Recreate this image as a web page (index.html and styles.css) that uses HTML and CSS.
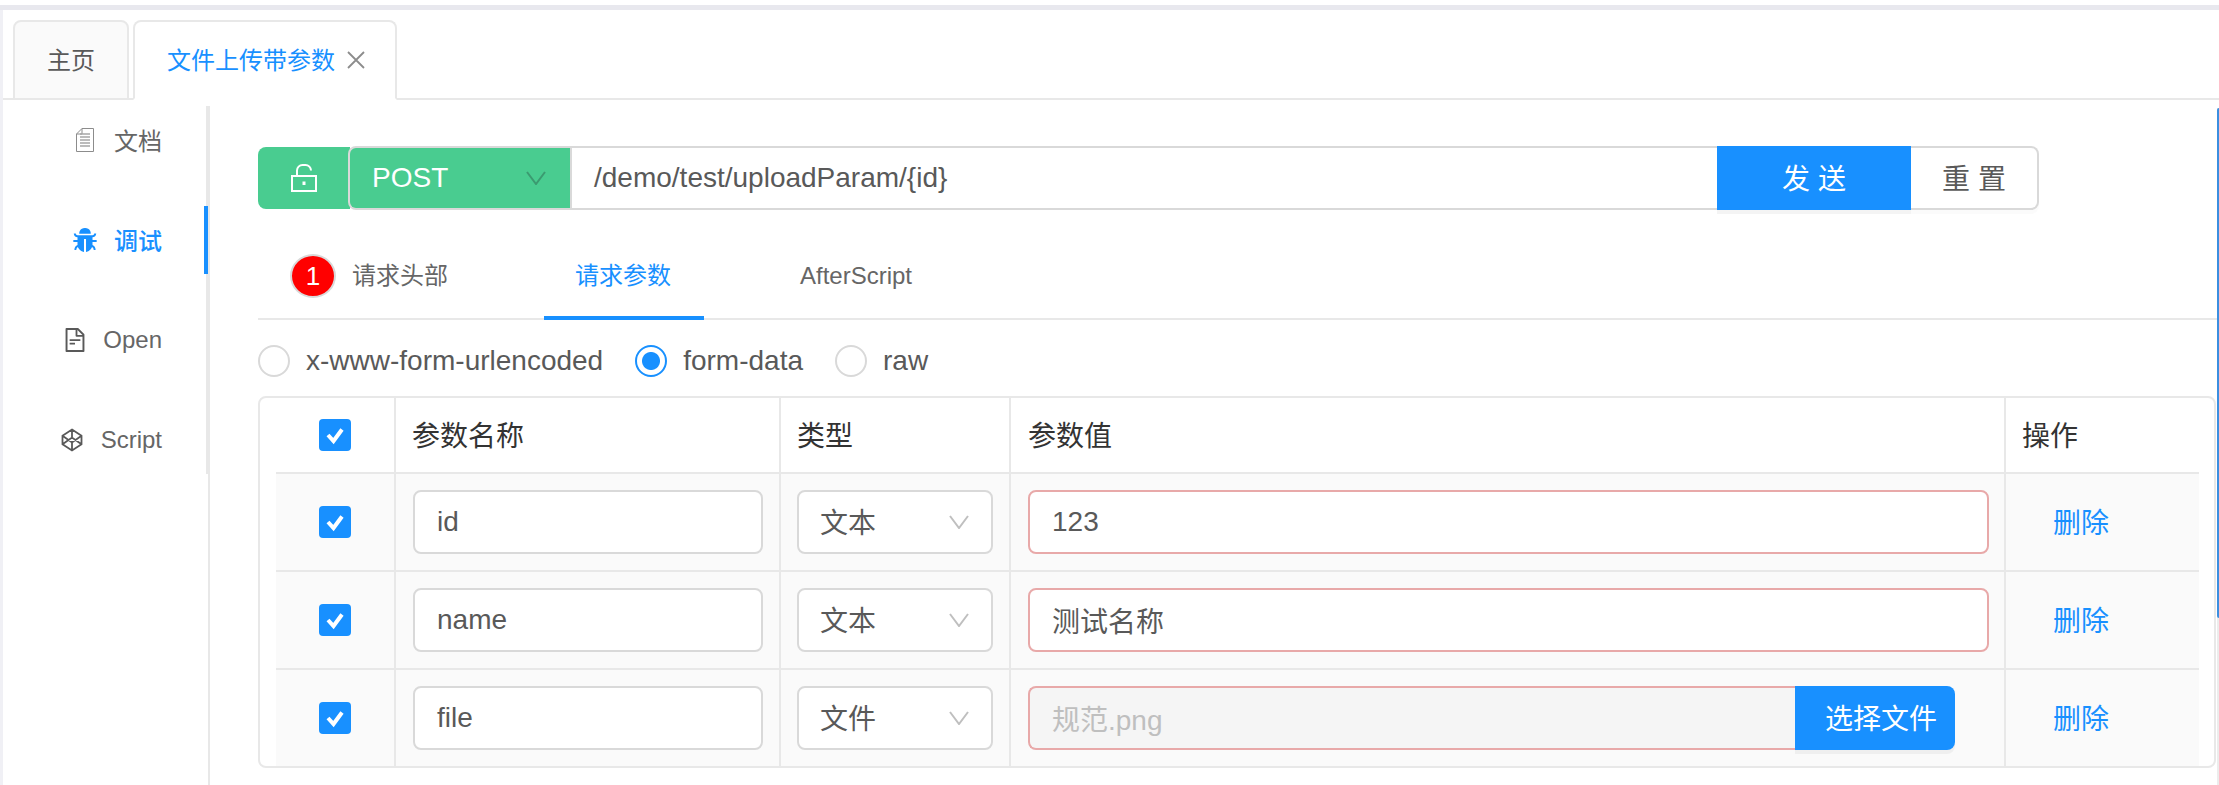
FILE: index.html
```html
<!DOCTYPE html>
<html lang="zh">
<head>
<meta charset="utf-8">
<title>文件上传带参数</title>
<link rel="stylesheet" href="styles.css">
</head>
<body>
<div class="topband"></div>
<div class="shell">
  <div class="strip"></div>
  <div class="app">
    <div class="tabbar">
      <div class="tab">主页</div>
      <div class="tab tab-active">文件上传带参数
        <svg class="tab-close" viewBox="0 0 18 18"><path d="M1 1l16 16M17 1L1 17"/></svg>
      </div>
    </div>
    <div class="workspace">
      <nav class="sidebar">
        <div class="nav-item">
          <svg class="ico-doc" viewBox="0 0 18 24"><path class="doc-outline" d="M6 .5h11.500v23H.5V6zM6 .5V6H.5"/><path class="doc-lines" d="M4 6h10M4 9h10M4 12h10M4 15h10M4 18h10"/></svg>
          <span class="nav-cjk">文档</span>
        </div>
        <div class="nav-item nav-active">
          <svg class="ico-bug" viewBox="64 64 896 896"><path d="M304 280h416c4.400 0 8-3.600 8-8 0-40-8.800-76.700-25.900-108.100a184.310 184.310 0 0 0-74-74C596.700 72.800 560 64 520 64h-16c-40 0-76.700 8.800-108.100 25.900a184.310 184.310 0 0 0-74 74C304.800 195.300 296 232 296 272c0 4.400 3.600 8 8 8z"/><path d="M940 512H792V412c76.800 0 139-62.200 139-139 0-4.400-3.600-8-8-8h-60c-4.400 0-8 3.600-8 8a63 63 0 0 1-63 63H232a63 63 0 0 1-63-63c0-4.400-3.600-8-8-8h-60c-4.400 0-8 3.600-8 8 0 76.800 62.200 139 139 139v100H84c-4.400 0-8 3.600-8 8v56c0 4.400 3.600 8 8 8h148v96c0 6.500.2 13 .7 19.300C164.100 728.600 116 796.700 116 876c0 4.400 3.600 8 8 8h56c4.400 0 8-3.600 8-8 0-44.200 23.900-82.900 59.600-103.700a273 273 0 0 0 22.700 49c24.300 41.500 59 76.200 100.500 100.500 28.900 16.900 61 28.800 95.300 34.500 4.400 0 8-3.600 8-8V484c0-4.400 3.600-8 8-8h60c4.400 0 8 3.600 8 8v464.200c0 4.400 3.600 8 8 8 34.300-5.700 66.400-17.600 95.300-34.500a281.380 281.380 0 0 0 123.200-149.500A120.400 120.400 0 0 1 836 876c0 4.400 3.600 8 8 8h56c4.400 0 8-3.600 8-8 0-79.300-48.100-147.400-116.700-176.700.4-6.400.7-12.800.7-19.300v-96h148c4.400 0 8-3.600 8-8v-56c0-4.400-3.600-8-8-8z"/></svg>
          <span class="nav-cjk">调试</span>
        </div>
        <div class="nav-item">
          <svg class="ico-file" viewBox="64 64 896 896"><path d="M854.600 288.600L639.400 73.400c-6-6-14.100-9.400-22.600-9.400H192c-17.700 0-32 14.300-32 32v832c0 17.700 14.300 32 32 32h640c17.700 0 32-14.300 32-32V311.300c0-8.500-3.400-16.700-9.400-22.700zM790.200 326H602V137.800L790.200 326zm1.800 562H232V136h302v216a42 42 0 0 0 42 42h216v494zM504 618H320c-4.400 0-8 3.600-8 8v48c0 4.400 3.600 8 8 8h184c4.400 0 8-3.600 8-8v-48c0-4.400-3.600-8-8-8zM312 490v48c0 4.400 3.600 8 8 8h384c4.400 0 8-3.600 8-8v-48c0-4.400-3.600-8-8-8H320c-4.400 0-8 3.600-8 8z"/></svg>
          <span>Open</span>
        </div>
        <div class="nav-item">
          <svg class="ico-cube" viewBox="0 0 22 24"><path d="M11 1.500l9.500 6.300v8.400L11 22.500l-9.500-6.300V7.800zM1.500 7.800L11 14.500l9.500-6.700M1.500 16.200L11 9.500l9.500 6.700M11 1.500v8M11 14.500v8"/></svg>
          <span>Script</span>
        </div>
      </nav>
      <main class="pane">
        <div class="urlbar">
          <div class="lock">
            <svg class="ico-lock" viewBox="0 0 26 28"><path class="lock-line" d="M1 12h24v15H1zM6 12V6.500A5.500 5.500 0 0 1 11.500 1h3A5.500 5.500 0 0 1 20 6.500"/><path class="lock-hole" d="M13 17.500v3.500"/></svg>
          </div>
          <div class="method">
            <span>POST</span>
            <svg class="chev chev-method" viewBox="0 0 20 14"><path d="M1 1l9 12 9-12"/></svg>
          </div>
          <div class="url">/demo/test/uploadParam/{id}</div>
          <div class="btn btn-send">发 送</div>
          <div class="btn btn-reset">重 置</div>
        </div>

        <div class="subtabs">
          <div class="subtab"><span class="badge">1</span><span>请求头部</span></div>
          <div class="subtab subtab-active"><span>请求参数</span></div>
          <div class="subtab"><span>AfterScript</span></div>
        </div>

        <div class="radios">
          <div class="radio"><span class="radio-dot"></span><span>x-www-form-urlencoded</span></div>
          <div class="radio"><span class="radio-dot radio-on"></span><span>form-data</span></div>
          <div class="radio"><span class="radio-dot"></span><span>raw</span></div>
        </div>

        <div class="table">
          <div class="row row-head">
            <div class="cell cell-check"><span class="check"><svg viewBox="0 0 32 32"><path d="M9 16l5.500 6L23 10.500"/></svg></span></div>
            <div class="cell cell-name">参数名称</div>
            <div class="cell cell-type">类型</div>
            <div class="cell cell-value">参数值</div>
            <div class="cell cell-op">操作</div>
          </div>

          <div class="row">
            <div class="cell cell-check"><span class="check"><svg viewBox="0 0 32 32"><path d="M9 16l5.500 6L23 10.500"/></svg></span></div>
            <div class="cell cell-name"><div class="field">id</div></div>
            <div class="cell cell-type"><div class="field field-select"><span>文本</span><svg class="chev" viewBox="0 0 20 14"><path d="M1 1l9 12 9-12"/></svg></div></div>
            <div class="cell cell-value"><div class="field field-error">123</div></div>
            <div class="cell cell-op"><span class="link">删除</span></div>
          </div>

          <div class="row">
            <div class="cell cell-check"><span class="check"><svg viewBox="0 0 32 32"><path d="M9 16l5.500 6L23 10.500"/></svg></span></div>
            <div class="cell cell-name"><div class="field">name</div></div>
            <div class="cell cell-type"><div class="field field-select"><span>文本</span><svg class="chev" viewBox="0 0 20 14"><path d="M1 1l9 12 9-12"/></svg></div></div>
            <div class="cell cell-value"><div class="field field-error">测试名称</div></div>
            <div class="cell cell-op"><span class="link">删除</span></div>
          </div>

          <div class="row row-last">
            <div class="cell cell-check"><span class="check"><svg viewBox="0 0 32 32"><path d="M9 16l5.500 6L23 10.500"/></svg></span></div>
            <div class="cell cell-name"><div class="field">file</div></div>
            <div class="cell cell-type"><div class="field field-select"><span>文件</span><svg class="chev" viewBox="0 0 20 14"><path d="M1 1l9 12 9-12"/></svg></div></div>
            <div class="cell cell-value">
              <div class="filegroup">
                <div class="field field-error field-file">规范.png</div>
                <div class="btn-file">选择文件</div>
              </div>
            </div>
            <div class="cell cell-op"><span class="link">删除</span></div>
          </div>
        </div>
      </main>
      <div class="scrollbar"><div class="thumb"></div></div>
    </div>
  </div>
</div>
</body>
</html>
```
FILE: styles.css
```css
* { box-sizing: border-box; }

html, body { margin: 0; height: 100%; }

body {
  background: #fff;
  color: #595959;
  font-family: "Liberation Sans", "Noto Sans CJK SC", sans-serif;
  font-size: 28px;
  overflow: hidden;
}

.topband {
  height: 5px;
  margin-top: 5px;
  background: #e8e8ee;
}

.shell { display: flex; height: 775px; }

.strip { width: 3px; flex: none; background: #f0f0f5; }

.app { flex: 1; min-width: 0; display: flex; flex-direction: column; }

/* top tabs */
.tabbar {
  display: flex;
  gap: 4px;
  height: 90px;
  padding: 10px 0 0 10px;
  border-bottom: 2px solid #e8e8e8;
}

.tab {
  display: flex;
  align-items: center;
  height: 80px;
  padding: 0 32px 4px 32px;
  font-size: 24px;
  background: #fafafa;
  border: 2px solid #e8e8e8;
  border-radius: 8px 8px 0 0;
}

.tab-active {
  color: #1890ff;
  background: #fff;
  border-bottom-color: #fff;
  padding-right: 30px;
}

.tab-close {
  width: 18px;
  height: 18px;
  margin: 4px 0 0 12px;
  fill: none;
  stroke: #8c8c8c;
  stroke-width: 1.800;
}

.workspace { flex: 1; display: flex; min-height: 0; padding-left: 10px; }

/* side navigation */
.sidebar {
  width: 195px;
  flex: none;
  height: 368px;
  margin-top: 6px;
  border-right: 2px solid #e8e8e8;
  font-size: 24px;
}

.nav-item {
  display: flex;
  align-items: center;
  justify-content: flex-end;
  height: 68px;
  margin: 0 -2px 32px 0;
  padding-right: 42px;
  border-right: 4px solid transparent;
  gap: 18px;
  color: #666;
}

.nav-item:last-child { margin-bottom: 0; }

.nav-cjk { padding-bottom: 2px; }

.nav-active { color: #1890ff; border-right-color: #1890ff; font-weight: 500; }

.ico-doc { width: 18px; height: 24px; margin-right: 2px; }
.doc-outline { fill: none; stroke: #8c8c8c; stroke-width: 1; }
.doc-lines { fill: none; stroke: #a6a6a6; stroke-width: 1.500; }

.ico-bug { width: 24px; height: 24px; fill: #1890ff; margin-right: -1px; }
.ico-file { width: 24px; height: 24px; fill: #595959; margin-right: -2px; }
.ico-cube { width: 22px; height: 24px; fill: none; stroke: #595959; stroke-width: 1.800; }

/* main pane */
.pane {
  flex: 1;
  min-width: 0;
  margin-top: 6px;
  padding: 40px 1px 0 48px;
  border-left: 2px solid #e8e8e8;
}

.urlbar { display: flex; width: 1781px; height: 64px; }

.lock {
  width: 92px;
  height: 62px;
  margin-top: 1px;
  display: flex;
  align-items: center;
  justify-content: center;
  background: #49cc90;
  border-radius: 8px 0 0 8px;
  flex: none;
}

.ico-lock { width: 26px; height: 28px; fill: none; stroke: #fff; stroke-width: 2; }
.lock-hole { stroke-width: 3; }

.method {
  width: 222px;
  flex: none;
  margin-left: -2px;
  display: flex;
  align-items: center;
  justify-content: space-between;
  padding: 0 24px 0 22px;
  color: #fff;
  background: #49cc90;
  border: 2px solid #d9d9d9;
  border-right: 0;
  border-radius: 8px 0 0 8px;
}

.chev {
  width: 20px;
  height: 14px;
  fill: none;
  stroke: #bfbfbf;
  stroke-width: 2;
}

.chev-method { stroke: #3b9a70; }

.url {
  flex: 1;
  min-width: 0;
  display: flex;
  align-items: center;
  padding-left: 22px;
  background: #fff;
  border: 2px solid #d9d9d9;
  border-right: 0;
}

.btn {
  display: flex;
  align-items: center;
  justify-content: center;
  flex: none;
  padding-bottom: 2px;
}

.btn-send {
  width: 194px;
  color: #fff;
  background: #1890ff;
  box-shadow: 0 4px 0 rgba(0, 0, 0, .045);
}

.btn-reset {
  width: 128px;
  background: #fff;
  border: 2px solid #d9d9d9;
  border-left: 0;
  border-radius: 0 8px 8px 0;
  box-shadow: 0 4px 0 rgba(0, 0, 0, .015);
}

/* request tabs */
.subtabs {
  display: flex;
  gap: 64px;
  height: 66px;
  margin-top: 44px;
  font-size: 24px;
  line-height: 44px;
  color: #666;
  border-bottom: 2px solid #e8e8e8;
}

.subtab { display: flex; padding: 0 32px; }

.subtab-active {
  height: 66px;
  padding: 0 33px 0 31px;
  color: #1890ff;
  border-bottom: 4px solid #1890ff;
}

.badge {
  width: 46px;
  height: 44px;
  margin-right: 16px;
  text-align: center;
  line-height: 40px;
  font-size: 26px;
  color: #fff;
  background: #f00;
  border: 2px solid #d9d9d9;
  border-radius: 50%;
}

/* body type radios */
.radios { display: flex; height: 32px; margin-top: 25px; gap: 32px; }

.radio { display: flex; align-items: center; gap: 16px; line-height: 32px; }

.radio-dot {
  width: 32px;
  height: 32px;
  flex: none;
  background: #fff;
  border: 2px solid #d9d9d9;
  border-radius: 50%;
}

.radio-on {
  border-color: #1890ff;
  background: radial-gradient(circle, #1890ff 0 8.500px, #fff 9.500px);
}

/* params table */
.table {
  width: 1958px;
  height: 372px;
  margin-top: 19px;
  padding: 0 15px 0 16px;
  border: 2px solid #e8e8e8;
  border-radius: 8px;
}

.row {
  display: grid;
  grid-template-columns: 120px 385px 230px 995px 193px;
  height: 98px;
  background: #fafafa;
  border-bottom: 2px solid #e8e8e8;
}

.row-head { height: 76px; background: #fff; color: #333; }
.row-last { height: 96px; border-bottom: 0; }

.cell {
  display: flex;
  align-items: center;
  border-right: 2px solid #e8e8e8;
  min-width: 0;
}

.cell-check { justify-content: center; padding-left: 0; }
.cell-name { padding: 0 16px 0 17px; }
.cell-type { padding: 0 16px; }
.cell-value { padding: 0 15px 0 17px; }
.cell-op { padding-left: 47px; border-right: 0; }

.row-head .cell-name { padding-left: 16px; }
.row-head .cell-op { padding-left: 16px; }
.row-head .cell:not(.cell-check) { padding-bottom: 2px; }

.check {
  width: 32px;
  height: 32px;
  background: #1890ff;
  border-radius: 4px;
}

.check svg {
  display: block;
  width: 32px;
  height: 32px;
  fill: none;
  stroke: #fff;
  stroke-width: 4;
}

.field {
  flex: 1;
  min-width: 0;
  height: 64px;
  display: flex;
  align-items: center;
  padding: 0 22px;
  background: #fff;
  border: 2px solid #d9d9d9;
  border-radius: 8px;
}

.field-select { justify-content: space-between; padding-left: 21px; }
.field-select span { padding-bottom: 2px; }
.field-error { border-color: #e8a9a9; }

.filegroup { flex: 1; display: flex; padding-right: 34px; }

.field-file {
  color: #bfbfbf;
  background: #f5f5f5;
  border-radius: 8px 0 0 8px;
  border-right: 0;
}

.btn-file {
  width: 160px;
  flex: none;
  height: 64px;
  display: flex;
  align-items: center;
  justify-content: flex-end;
  padding: 0 18px 2px 0;
  color: #fff;
  background: #1890ff;
  border-radius: 0 8px 8px 0;
  box-shadow: 0 4px 0 rgba(0, 0, 0, .045);
}

.link { color: #1890ff; padding-bottom: 2px; }

/* right edge scrollbar */
.scrollbar {
  position: absolute;
  top: 108px;
  right: 0;
  width: 2px;
  height: 677px;
  background: #ececec;
}

.thumb {
  height: 510px;
  background: #3b8fe0;
  border-radius: 2px 0 0 2px;
}
```
